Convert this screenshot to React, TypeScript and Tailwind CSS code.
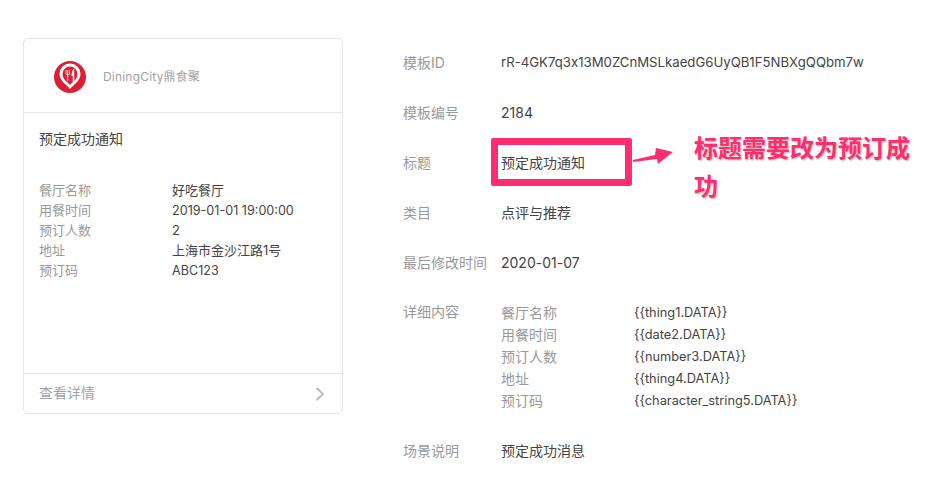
const FONT = "font-['Inter','Noto_Sans_CJK_SC',sans-serif]";

const previewRows = [
  ["餐厅名称", "好吃餐厅", "text-[13px]"],
  ["用餐时间", "2019-01-01 19:00:00", "text-[12.600px]"],
  ["预订人数", "2", "text-[13px]"],
  ["地址", "上海市金沙江路1号", "text-[13px]"],
  ["预订码", "ABC123", "text-[12.600px]"],
];

const detailRows = [
  ["餐厅名称", "{{thing1.DATA}}"],
  ["用餐时间", "{{date2.DATA}}"],
  ["预订人数", "{{number3.DATA}}"],
  ["地址", "{{thing4.DATA}}"],
  ["预订码", "{{character_string5.DATA}}"],
];

function Logo() {
  return (
    <svg width="32" height="32" viewBox="0 0 32 32">
      <circle cx="16" cy="16" r="16" fill="#dc1f35" />
      <path d="M16 28 C13 24 5.500 20 5.500 13 A10.500 10.500 0 0 1 26.500 13 C26.500 20 19 24 16 28Z" fill="#fff" />
      <path d="M16 24 C14 21.500 8.500 18.500 8.500 13 A7.500 7.500 0 0 1 23.500 13 C23.500 18.500 18 21.500 16 24Z" fill="#dc1f35" />
      <path d="M12 9 V13.500 M13.700 9 V13.500 M15.400 9 V13.500 M12 13.500 H15.400 M13.700 13.500 V20" stroke="#f5c2c8" strokeWidth="1" fill="none" />
      <path d="M20 7.500 C18.200 9 17.500 12.500 17.500 15 H18.800 V21 H20.200 V7.500Z" fill="#fff" />
    </svg>
  );
}

function InfoRow({ label, children }: { label: string; children: React.ReactNode }) {
  return (
    <div className="flex h-[50px] items-center">
      <div className="w-[98px] shrink-0 text-[14px] text-[#999]">{label}</div>
      <div className="text-[14px] text-[#444] [font-feature-settings:'calt'_0]">{children}</div>
    </div>
  );
}

export default function App() {
  return (
    <div className={`relative flex h-[497px] w-[947px] overflow-hidden bg-white pl-[23px] pt-[38px] ${FONT}`}>
      <div className="flex h-[376px] w-[320px] shrink-0 flex-col rounded-[5px] border border-[#e5e5e5]">
        <div className="flex h-[74px] items-center border-b border-[#e5e5e5] pl-[30px] pt-[3px]">
          <Logo />
          <span className="ml-[17px] text-[12px] tracking-[0.2px] text-[#a3a3a3]">DiningCity鼎食聚</span>
        </div>
        <div className="flex-1 px-[15px]">
          <div className="mt-[16px] text-[14px] leading-[20px] text-[#444]">预定成功通知</div>
          <div className="mt-[32px]">
            {previewRows.map(([label, value, size]) => (
              <div key={label} className="flex h-[20px] items-center text-[13px]">
                <span className="w-[133px] text-[#999]">{label}</span>
                <span className={`${size} text-[#444]`}>{value}</span>
              </div>
            ))}
          </div>
        </div>
        <div className="flex h-[40px] items-center justify-between border-t border-[#e5e5e5] pl-[15px] pr-[17px]">
          <span className="-mt-[2px] text-[14px] text-[#a3a3a3]">查看详情</span>
          <svg width="10" height="14" viewBox="0 0 10 14" fill="none" stroke="#bdbdbd" strokeWidth="2">
            <path d="M1.500 1 L8 7 L1.500 13" />
          </svg>
        </div>
      </div>

      <div className="-mt-[1px] ml-[60px] flex flex-col">
        <InfoRow label="模板ID"><span className="block pt-[1px] text-[13.200px]">rR-4GK7q3x13M0ZCnMSLkaedG6UyQB1F5NBXgQQbm7w</span></InfoRow>
        <InfoRow label="模板编号">2184</InfoRow>
        <InfoRow label="标题">预定成功通知</InfoRow>
        <InfoRow label="类目">点评与推荐</InfoRow>
        <InfoRow label="最后修改时间">2020-01-07</InfoRow>
        <div className="mt-[14px] flex">
          <div className="w-[98px] shrink-0 text-[14px] leading-[22px] text-[#999]">详细内容</div>
          <div>
            {detailRows.map(([label, value]) => (
              <div key={label} className="flex h-[22px] items-center text-[14px]">
                <span className="w-[133px] text-[#999]">{label}</span>
                <span className="pt-[1px] text-[12.800px] text-[#444]">{value}</span>
              </div>
            ))}
          </div>
        </div>
        <div className="mt-[14px]">
          <InfoRow label="场景说明">预定成功消息</InfoRow>
        </div>
      </div>

      {/* annotation drawn over the screenshot */}
      <div className="absolute left-[491px] top-[138px] h-[48px] w-[141px] rounded-[2px] border-[7px] border-[#ff2d6f]" />
      <svg className="absolute left-[630px] top-[145px]" width="46" height="22" viewBox="0 0 46 22">
        <path d="M3 15 L25 10 L26 3 L43 7 L28 19 L27 14 L3 17Z" fill="#ff2d6f" />
      </svg>
      <div className="absolute left-[694px] top-[130px] w-[225px] text-[24px] font-bold leading-[38px] text-[#ff2d6f] [text-shadow:1px_1px_2px_rgba(0,0,0,0.3)]">
        标题需要改为预订成功
      </div>
    </div>
  );
}
